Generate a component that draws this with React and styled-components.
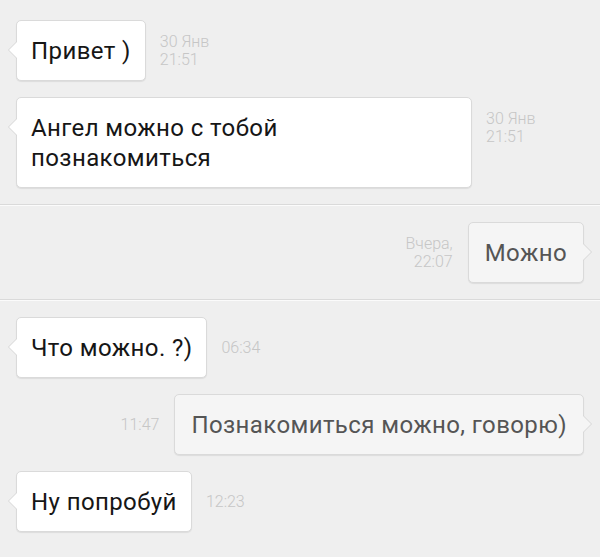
import styled, { createGlobalStyle, css } from "styled-components";

const GlobalStyle = createGlobalStyle`
  html, body {
    margin: 0;
    padding: 0;
    background: #efefef;
  }
  body {
    font-family: Roboto, "Noto Sans", sans-serif;
  }
`;

const messages = [
  { id: 1, out: false, text: "Привет )", time: ["30 Янв", "21:51"] },
  { id: 2, out: false, text: ["Ангел можно с тобой", "познакомиться"], time: ["30 Янв", "21:51"], width: 456 },
  { divider: true, id: "d1" },
  { id: 3, out: true, text: "Можно", time: ["Вчера,", "22:07"] },
  { divider: true, id: "d2" },
  { id: 4, out: false, text: "Что можно. ?)", time: ["06:34"] },
  { id: 5, out: true, text: "Познакомиться можно, говорю)", time: ["11:47"] },
  { id: 6, out: false, text: "Ну попробуй", time: ["12:23"] },
];

function App() {
  return (
    <>
      <GlobalStyle />
      <Chat>
        {messages.map((m) =>
          m.divider ? (
            <Divider key={m.id} />
          ) : (
            <Row key={m.id} $out={m.out}>
              <Bubble $out={m.out} style={m.width ? { width: m.width } : undefined}>
                {Array.isArray(m.text)
                  ? m.text.map((line) => <div key={line}>{line}</div>)
                  : m.text}
              </Bubble>
              <Time $out={m.out}>
                <div>
                  {m.time.map((t) => (
                    <div key={t}>{t}</div>
                  ))}
                </div>
              </Time>
            </Row>
          )
        )}
      </Chat>
    </>
  );
}

const Chat = styled.div`
  min-height: 557px;
  box-sizing: border-box;
  padding: 20px 16px 0;
  display: flex;
  flex-direction: column;
  gap: 16px;
  background: #efefef;
`;

const Divider = styled.div`
  margin: 0 -16px;
  height: 0;
  border-top: 1px solid #dadada;
  border-bottom: 1px solid #fbfbfb;
`;

const Row = styled.div`
  display: flex;
  align-items: flex-start;
  gap: 14px;
  flex-direction: ${(p) => (p.$out ? "row-reverse" : "row")};
  ${(p) => p.$out && css`gap: 15px;`}
`;

const Bubble = styled.div`
  position: relative;
  box-sizing: border-box;
  padding: 15px 14px 14px 14px;
  font-size: 24px;
  letter-spacing: 0.4px;
  line-height: 30px;
  border-radius: 5px;
  border: 1px solid #dadada;
  box-shadow: 0 1px 1px rgba(0, 0, 0, 0.08);
  background: ${(p) => (p.$out ? "#f5f5f5" : "#ffffff")};
  color: ${(p) => (p.$out ? "#555555" : "#161616")};
  ${(p) => p.$out && css`padding: 15px 16px 14px;`}

  &::before,
  &::after {
    content: "";
    position: absolute;
    width: 0;
    height: 0;
    border-style: solid;
    border-color: transparent;
  }
  &::before {
    top: 20px;
    border-width: 9px;
    ${(p) =>
      p.$out
        ? css`right: -18px; border-left-color: #d6d6d6;`
        : css`left: -18px; border-right-color: #d6d6d6;`}
  }
  &::after {
    top: 21px;
    border-width: 8px;
    ${(p) =>
      p.$out
        ? css`right: -16px; border-left-color: #f5f5f5;`
        : css`left: -16px; border-right-color: #ffffff;`}
  }
`;

const Time = styled.div`
  min-height: 61px;
  display: flex;
  align-items: center;
  font-size: 16px;
  font-weight: 300;
  line-height: 18px;
  color: #c6c6c6;
  text-align: ${(p) => (p.$out ? "right" : "left")};
`;

export default App;
